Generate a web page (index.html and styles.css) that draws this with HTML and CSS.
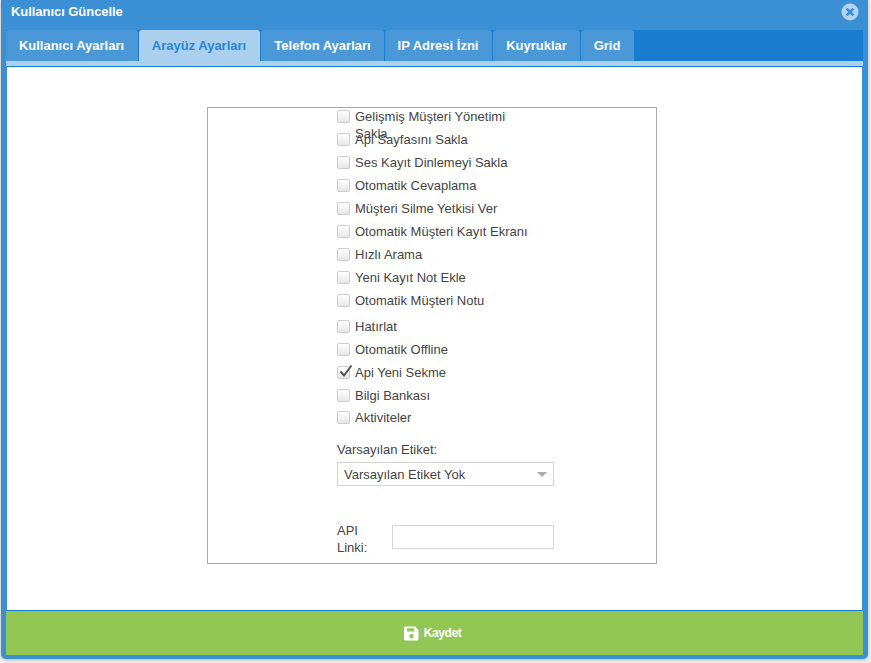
FILE: index.html
```html
<!DOCTYPE html>
<html lang="tr">
<head>
<meta charset="utf-8">
<title>Kullanıcı Güncelle</title>
<link rel="stylesheet" href="styles.css">
</head>
<body>
<div class="window">
  <header class="titlebar">
    <span class="title">Kullanıcı Güncelle</span>
    <svg class="close" viewBox="0 0 18 18" width="18" height="18" aria-hidden="true">
      <circle cx="9" cy="9" r="8.5" fill="#b5d3ef"/>
      <path d="M5.6 5.6 12.4 12.4M12.4 5.6 5.6 12.4" stroke="#3a8fd5" stroke-width="2.6" fill="none"/>
    </svg>
  </header>
  <nav class="tabs">
    <a class="tab t1">Kullanıcı Ayarları</a>
    <a class="tab t2 active">Arayüz Ayarları</a>
    <a class="tab t3">Telefon Ayarları</a>
    <a class="tab t4">IP Adresi İzni</a>
    <a class="tab t5">Kuyruklar</a>
    <a class="tab t6">Grid</a>
  </nav>
  <div class="tabline"></div>
  <main class="content">
    <form class="box">
      <div class="group">
        <label class="check"><span class="cb"></span><span class="text">Gelişmiş Müşteri Yönetimi Sakla</span></label>
        <label class="check"><span class="cb"></span><span class="text">Api Sayfasını Sakla</span></label>
        <label class="check"><span class="cb"></span><span class="text">Ses Kayıt Dinlemeyi Sakla</span></label>
        <label class="check"><span class="cb"></span><span class="text">Otomatik Cevaplama</span></label>
        <label class="check"><span class="cb"></span><span class="text">Müşteri Silme Yetkisi Ver</span></label>
        <label class="check"><span class="cb"></span><span class="text">Otomatik Müşteri Kayıt Ekranı</span></label>
        <label class="check"><span class="cb"></span><span class="text">Hızlı Arama</span></label>
        <label class="check"><span class="cb"></span><span class="text">Yeni Kayıt Not Ekle</span></label>
        <label class="check"><span class="cb"></span><span class="text">Otomatik Müşteri Notu</span></label>
      </div>
      <div class="group second">
        <label class="check"><span class="cb"></span><span class="text">Hatırlat</span></label>
        <label class="check"><span class="cb"></span><span class="text">Otomatik Offline</span></label>
        <label class="check"><span class="cb"><svg class="tick" viewBox="0 0 15 15" width="15" height="15" aria-hidden="true"><path d="M2.5 7.5 6 11.5 13.5 1.5" fill="none" stroke="#555" stroke-width="2"/></svg></span><span class="text">Api Yeni Sekme</span></label>
        <label class="check"><span class="cb"></span><span class="text">Bilgi Bankası</span></label>
        <label class="check tight"><span class="cb"></span><span class="text">Aktiviteler</span></label>
      </div>
      <div class="field">
        <div class="field-label">Varsayılan Etiket:</div>
        <div class="select"><span>Varsayılan Etiket Yok</span><i class="arrow"></i></div>
      </div>
      <div class="api">
        <div class="api-label">API Linki:</div>
        <input class="api-input" type="text">
      </div>
    </form>
  </main>
  <button class="save" type="button">
    <svg viewBox="0 0 15 15" width="15" height="15" aria-hidden="true">
      <path fill-rule="evenodd" fill="#fff" d="M1.5 0.5H11L14.5 4V13A1.5 1.5 0 0 1 13 14.5H1.5A1.5 1.5 0 0 1 0 13V2A1.5 1.5 0 0 1 1.5 0.5ZM3 2.2V5.6H10V2.2ZM7.5 8A2.2 2.2 0 1 0 7.5 12.4 2.2 2.2 0 1 0 7.5 8Z"/>
    </svg>
    <span>Kaydet</span>
  </button>
</div>
</body>
</html>
```

FILE: styles.css
```css
* { box-sizing: border-box; }
html, body { margin: 0; height: 100%; }
body {
  background: #ececec;
  font-family: "Liberation Sans", Arial, sans-serif;
  overflow: hidden;
  padding: 0 3px 0 1px;
}
.window {
  width: 867px;
  height: 659px;
  background: #3a8fd5;
  border-radius: 0 0 5px 5px;
  padding: 0 5px 4px 5px;
  display: flex;
  flex-direction: column;
  box-shadow: 0 1px 3px rgba(0, 0, 0, .2);
}
.titlebar {
  height: 30px;
  flex: none;
  display: flex;
  align-items: center;
  justify-content: space-between;
  padding: 0 4px 6px 5px;
}
.title { color: #fff; font-size: 13px; font-weight: bold; margin-top: -2px; letter-spacing: -.05px; }
.close { display: block; }
.tabs {
  height: 31px;
  flex: none;
  display: flex;
  background: #187cd0;
  gap: 1px;
}
.tab {
  height: 31px;
  background: #4b98d8;
  border-radius: 3px 3px 0 0;
  color: #fff;
  font-size: 13px;
  font-weight: bold;
  line-height: 31px;
  text-align: center;
}
.t1 { width: 132px; padding-right: 1px; }
.t2 { width: 121px; padding-right: 1px; }
.t3 { width: 123px; }
.t4 { width: 107px; padding-right: 1px; }
.t5 { width: 87px; }
.t6 { width: 53px; padding-right: 1px; }
.tab.active { background: #abd0ee; color: #2b85cf; }
.tabline { height: 5px; flex: none; background: #abd0ee; }
.content {
  flex: 1;
  min-height: 0;
  margin: 0 1px;
  background: #fff;
  border-top: 1px solid #187cd0;
  border-bottom: 1px solid #187cd0;
  padding-top: 40px;
}
.box {
  width: 450px;
  height: 457px;
  margin-left: 200px;
  border: 1px solid #a9a9a9;
  padding-left: 129px;
  color: #444;
  font-size: 13px;
}
.group { display: flex; flex-direction: column; }
.second { margin-top: 3px; }
.check {
  height: 23px;
  display: flex;
  align-items: flex-start;
  padding-top: 1px;
  line-height: 15px;
}
.tight { margin-top: -1px; }
.cb {
  position: relative;
  flex: none;
  width: 13px;
  height: 13px;
  margin-top: 1px;
  margin-right: 5px;
  border: 1px solid #ccc;
  border-radius: 2px;
  background: linear-gradient(#fff, #e6e6e6);
}
.tick { position: absolute; left: 0; top: -3px; }
.text { width: 175px; line-height: 17px; margin-top: -1px; }
.field { margin-top: 9px; }
.field-label { line-height: 17px; }
.select {
  width: 217px;
  height: 24px;
  margin-top: 4px;
  border: 1px solid #d4d4d4;
  padding: 0 6px;
  display: flex;
  align-items: center;
  justify-content: space-between;
  color: #444;
  font-size: 13px;
}
.arrow {
  width: 0;
  height: 0;
  border-left: 5px solid transparent;
  border-right: 5px solid transparent;
  border-top: 5px solid #aaa;
}
.api { display: flex; align-items: flex-start; margin-top: 39px; }
.api-label { width: 55px; line-height: 17px; padding-right: 20px; margin-top: -3px; }
.api-input {
  width: 162px;
  height: 24px;
  margin: 0;
  border: 1px solid #d4d4d4;
  background: #fff;
}
.save {
  flex: none;
  height: 44px;
  border: 0;
  padding: 0 4px 0 0;
  background: #92c655;
  color: #fff;
  font-family: inherit;
  font-size: 12px;
  letter-spacing: -.4px;
  font-weight: bold;
  display: flex;
  align-items: center;
  justify-content: center;
  gap: 5px;
}
```
